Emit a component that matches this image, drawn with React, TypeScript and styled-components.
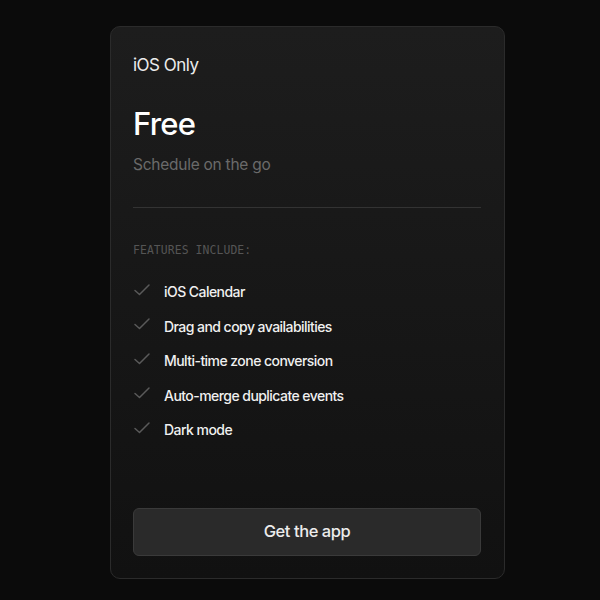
import styled, { createGlobalStyle } from 'styled-components';

const GlobalStyle = createGlobalStyle`
  html, body {
    margin: 0;
    padding: 0;
    background: #0b0b0b;
  }
  body {
    font-family: Inter, "Noto Sans", sans-serif;
  }
`;

const Page = styled.div`
  width: 600px;
  height: 600px;
  display: flex;
  justify-content: flex-start;
  padding: 26px 0 0 110px;
  box-sizing: border-box;
`;

const Card = styled.div`
  width: 395px;
  height: 553px;
  box-sizing: border-box;
  border: 1px solid #2b2b2b;
  border-radius: 10px;
  background: linear-gradient(180deg, #1d1d1d 0%, #171717 50%, #111111 100%);
  padding: 26px 23px 22px 22px;
  display: flex;
  flex-direction: column;
`;

const Platform = styled.div`
  color: #ececec;
  font-size: 17px;
  letter-spacing: -0.5px;
  line-height: 24px;
`;

const Price = styled.div`
  color: #ffffff;
  font-size: 31px;
  font-weight: 500;
  letter-spacing: -0.8px;
  line-height: 40px;
  margin-top: 27px;
`;

const Subtitle = styled.div`
  color: #6a6a6a;
  font-size: 15.5px;
  letter-spacing: -0.25px;
  line-height: 22px;
  margin-top: 10px;
`;

const Divider = styled.hr`
  border: none;
  border-top: 1px solid #333333;
  margin: 31px 0 0;
`;

const FeaturesLabel = styled.div`
  color: #555555;
  font-family: "DejaVu Sans Mono", "Liberation Mono", monospace;
  font-size: 11.4px;
  letter-spacing: 0.1px;
  line-height: 16px;
  margin-top: 34px;
`;

const FeatureList = styled.ul`
  list-style: none;
  margin: 24px 0 0;
  padding: 0;
  display: flex;
  flex-direction: column;
  gap: 14.5px;
`;

const FeatureItem = styled.li`
  display: flex;
  align-items: center;
  gap: 13px;
  color: #f0f0f0;
  font-size: 14px;
  font-weight: 500;
  letter-spacing: -0.55px;
  line-height: 20px;
`;

const CheckIcon = styled.svg`
  flex: none;
  width: 18px;
  height: 18px;
  margin-top: -5px;
`;

const Spacer = styled.div`
  flex: 1;
`;

const Button = styled.button`
  width: 100%;
  height: 48px;
  border: 1px solid #3a3a3a;
  border-radius: 6px;
  background: #2a2a2a;
  color: #ececec;
  font-family: Inter, "Noto Sans", sans-serif;
  font-size: 16.5px;
  font-weight: 500;
  letter-spacing: -0.45px;
  padding-bottom: 3px;
  cursor: pointer;
`;

const features = [
  'iOS Calendar',
  'Drag and copy availabilities',
  'Multi-time zone conversion',
  'Auto-merge duplicate events',
  'Dark mode',
];

const Check = () => (
  <CheckIcon viewBox="0 0 18 18" fill="none">
    <path
      d="M2 9.5 L6.5 13.5 L16 4"
      stroke="#5a5a5a"
      strokeWidth="1.5"
      strokeLinecap="round"
      strokeLinejoin="round"
    />
  </CheckIcon>
);

const App = () => {
  return (
    <>
      <GlobalStyle />
      <Page>
        <Card>
          <Platform>{'iOS Only'}</Platform>
          <Price>{'Free'}</Price>
          <Subtitle>{'Schedule on the go'}</Subtitle>
          <Divider />
          <FeaturesLabel>{'FEATURES INCLUDE:'}</FeaturesLabel>
          <FeatureList>
            {features.map((f) => (
              <FeatureItem key={f}>
                <Check />
                {f}
              </FeatureItem>
            ))}
          </FeatureList>
          <Spacer />
          <Button>{'Get the app'}</Button>
        </Card>
      </Page>
    </>
  );
};

export default App;
